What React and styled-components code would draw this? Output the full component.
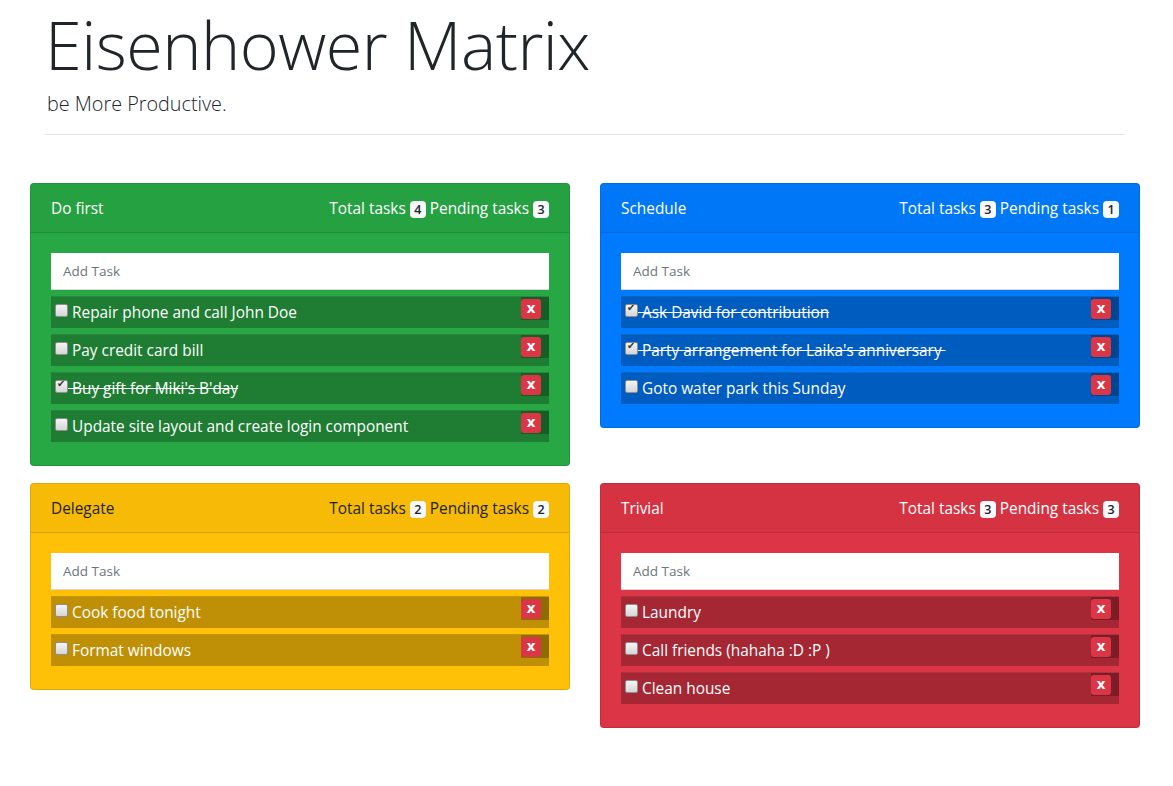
import React from "react";
import styled, { createGlobalStyle } from "styled-components";

const GlobalStyle = createGlobalStyle`
  html, body { margin: 0; padding: 0; background: #fff; }
  body {
    font-family: "Open Sans", "Noto Sans", "DejaVu Sans", sans-serif;
    color: #212529;
    font-size: 16px;
  }
  * { box-sizing: border-box; }
`;

const Page = styled.div`
  padding: 0 33px 40px 30px;
`;

const Header = styled.header`
  margin: 0 15px 0 15px;
`;

const Title = styled.h1`
  margin: 0;
  font-size: 66.5px;
  font-weight: 300;
  line-height: 88px;
  letter-spacing: -0.5px;
  color: #212529;
`;

const Lead = styled.p`
  margin: 2px 0 0 2px;
  font-size: 19.8px;
  font-weight: 300;
  line-height: 28px;
`;

const Rule = styled.hr`
  margin: 16px 0 48px;
  border: 0;
  border-top: 1px solid rgba(0, 0, 0, 0.1);
`;

const Grid = styled.div`
  display: grid;
  grid-template-columns: 540px 540px;
  column-gap: 30px;
  row-gap: 17px;
  align-items: start;
`;

const Card = styled.section`
  background: ${(p) => p.$bg};
  color: ${(p) => p.$fg};
  border: 1px solid rgba(0, 0, 0, 0.125);
  border-radius: 4px;
  overflow: hidden;
`;

const CardHeader = styled.div`
  display: flex;
  justify-content: space-between;
  align-items: center;
  padding: 13px 20px 11px;
  line-height: 24px;
  font-size: 15.4px;
  background: rgba(0, 0, 0, 0.03);
  border-bottom: 1px solid rgba(0, 0, 0, 0.125);
`;

const Stats = styled.div`
  display: flex;
  align-items: center;
  gap: 4px;
`;

const Badge = styled.span`
  display: inline-block;
  background: #f8f9fa;
  color: #212529;
  font-size: 12.5px;
  font-weight: 600;
  line-height: 13px;
  padding: 2px 4px;
  border-radius: 4px;
  min-width: 16px;
  text-align: center;
`;

const CardBody = styled.div`
  padding: 20px 20px 23px;
`;

const TaskInput = styled.input`
  display: block;
  width: 100%;
  height: 37px;
  padding: 6px 12px;
  border: none;
  border-bottom: 1px solid #d8d8d8;
  border-radius: 0;
  background: #fff;
  font-family: inherit;
  font-size: 13.5px;
  color: #495057;
  outline: none;
  &::placeholder { color: #6c757d; }
`;

const TaskList = styled.ul`
  list-style: none;
  margin: 0;
  padding: 0;
`;

const Task = styled.li`
  display: flex;
  align-items: flex-start;
  justify-content: space-between;
  margin-top: 6px;
  height: 32px;
  background: rgba(0, 0, 0, 0.25);
  border-top: 1px solid rgba(255, 255, 255, 0.06);
  color: #fff;
`;

const TaskLabel = styled.label`
  display: flex;
  align-items: center;
  padding: 0 0 0 4px;
  height: 30px;
  font-size: 15.4px;
  white-space: pre;
`;

const TaskText = styled.span`
  text-decoration: ${(p) => (p.$done ? "line-through" : "none")};
`;

const Check = styled.input`
  appearance: none;
  -webkit-appearance: none;
  position: relative;
  width: 13px;
  height: 13px;
  margin: -3px 0 0 0;
  border: 1px solid #8f8f8f;
  border-radius: 2px;
  background: linear-gradient(#f4f4f4, #d6d6d6);
  flex: none;
  &:checked::after {
    content: "✔";
    position: absolute;
    left: 1px;
    top: -3px;
    font-family: "DejaVu Sans", sans-serif;
    font-size: 10px;
    color: #333;
  }
`;

const DeleteWrap = styled.div`
  width: 28px;
  height: 23px;
  padding-top: 2px;
  background: rgba(0, 0, 0, 0.25);
  flex: none;
`;

const DeleteButton = styled.button`
  display: flex;
  align-items: center;
  justify-content: center;
  width: 20px;
  height: 20px;
  padding: 0 0 2px;
  border: none;
  border-radius: 3px;
  background: #dc3545;
  color: #fff;
  font-family: "DejaVu Sans", sans-serif;
  font-size: 14px;
  font-weight: 700;
  line-height: 1;
`;

const quadrants = [
  {
    title: "Do first",
    bg: "#28a745",
    fg: "#fff",
    tasks: [
      ["Repair phone and call John Doe", false],
      ["Pay credit card bill", false],
      ["Buy gift for Miki's B'day", true],
      ["Update site layout and create login component", false],
    ],
  },
  {
    title: "Schedule",
    bg: "#007bff",
    fg: "#fff",
    tasks: [
      ["Ask David for contribution", true],
      ["Party arrangement for Laika's anniversary ", true],
      ["Goto water park this Sunday", false],
    ],
  },
  {
    title: "Delegate",
    bg: "#ffc107",
    fg: "#212529",
    tasks: [
      ["Cook food tonight", false],
      ["Format windows", false],
    ],
  },
  {
    title: "Trivial",
    bg: "#dc3545",
    fg: "#fff",
    tasks: [
      ["Laundry", false],
      ["Call friends (hahaha :D :P )", false],
      ["Clean house", false],
    ],
  },
];

function Quadrant({ q }) {
  const total = q.tasks.length;
  const pending = q.tasks.filter((t) => !t[1]).length;
  return (
    <Card $bg={q.bg} $fg={q.fg}>
      <CardHeader>
        <span>{q.title}</span>
        <Stats>
          <span>Total tasks</span>
          <Badge>{total}</Badge>
          <span>Pending tasks</span>
          <Badge>{pending}</Badge>
        </Stats>
      </CardHeader>
      <CardBody>
        <TaskInput placeholder="Add Task" />
        <TaskList>
          {q.tasks.map(([text, done]) => (
            <Task key={text}>
              <TaskLabel>
                <Check type="checkbox" defaultChecked={done} />
                <TaskText $done={done}>{" " + text}</TaskText>
              </TaskLabel>
              <DeleteWrap>
                <DeleteButton>x</DeleteButton>
              </DeleteWrap>
            </Task>
          ))}
        </TaskList>
      </CardBody>
    </Card>
  );
}

export default function App() {
  return (
    <>
      <GlobalStyle />
      <Page>
        <Header>
          <Title>Eisenhower Matrix</Title>
          <Lead>be More Productive.</Lead>
          <Rule />
        </Header>
        <Grid>
          {quadrants.map((q) => (
            <Quadrant key={q.title} q={q} />
          ))}
        </Grid>
      </Page>
    </>
  );
}
